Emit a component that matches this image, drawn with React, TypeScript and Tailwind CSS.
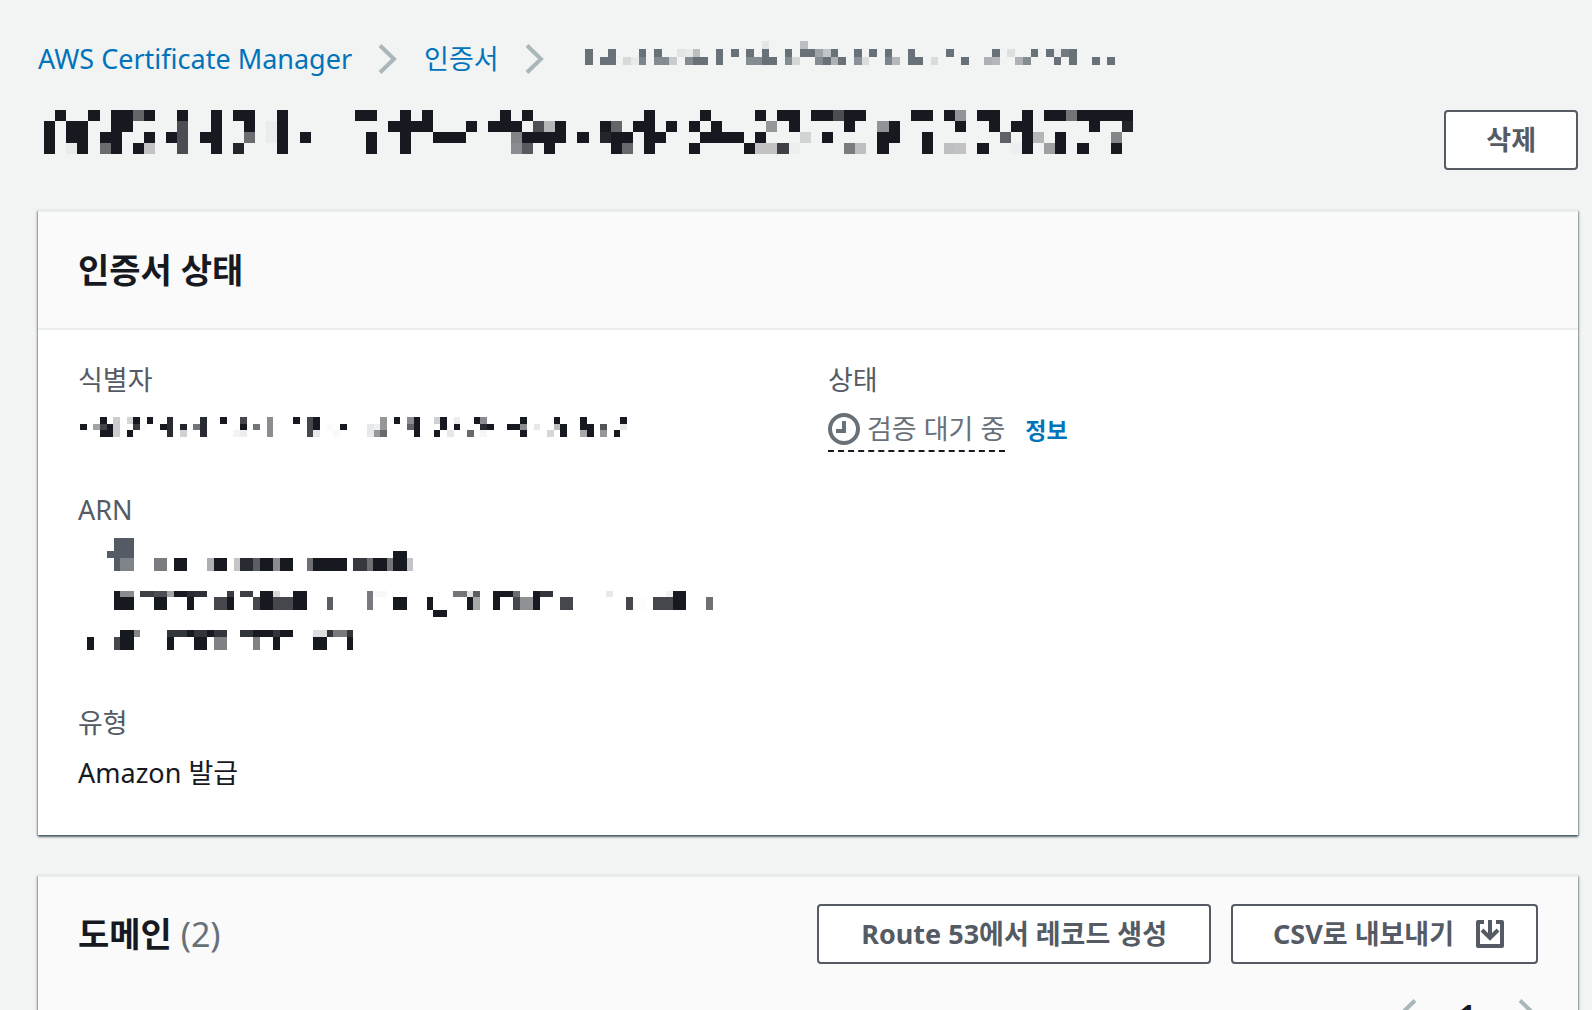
import React from "react";

type Row = { ink: string; slate?: string; span?: number };

/* Each token is "column", "from-to" or either one followed by ":opacity" in percent. */
function Mosaic({
  rows,
  cols,
  ink,
  label,
  className,
}: {
  rows: Row[];
  cols: number;
  ink: string;
  label: string;
  className: string;
}) {
  const cells: React.ReactNode[] = [];
  let y = 0;
  rows.forEach((row, r) => {
    const span = row.span ?? 1;
    const add = (text: string, fill: string) =>
      text
        .split(" ")
        .filter(Boolean)
        .forEach((token) => {
          const [range, opacity] = token.split(":");
          const [from, to] = range.split("-").map(Number);
          cells.push(
            <rect
              key={`${r}-${fill}-${token}`}
              x={from}
              y={y}
              width={(to ?? from) - from + 1}
              height={span}
              fill={fill}
              fillOpacity={opacity ? Number(opacity) / 100 : 1}
            />
          );
        });
    add(row.ink, ink);
    if (row.slate) add(row.slate, "#545b64");
    y += span;
  });
  return (
    <svg
      role="img"
      aria-label={label}
      viewBox={`0 0 ${cols} ${y}`}
      preserveAspectRatio="none"
      shapeRendering="crispEdges"
      className={className}
    >
      {cells}
    </svg>
  );
}

const crumbRows: Row[] = [
  { ink: "23:10 28:40" },
  { ink: "0 3 7 9 12:12 13:7 14:40 17 19 21 23 26 28-29 30:60 31:35 32 35 37 39 42 47 53 55:15 58 60 61:4 62:93 63" },
  { ink: "0 2-3 5:20 6:6 7:85 9-10:80 11:30 13:80 14-15 17 21-22:80 23-24 26:80 27:22 30:80 31 32:50 33 35:75 36:18 39:85 40:45 42-43 45:18 49 52:50 53:45 56:50 57:80 61 63 66 68" },
];

const titleRows: Row[] = [
  { ink: "1 4 6-7 8:65 9 12 15 17-18 21 28-29 32 34 41 43 54 59 64 66-67 69-70 71:76 72-73 78-79 81 82:44 84-85 88 90-91 92:58 93-97" },
  { ink: "0 2-3 6-7 12:76 15 18 20:3 21 31-34 38 40-42 44:75 45:28 46 50 51:65 53-54 56 58 60 65:42 67 72 75:44 76 82 85 87-88 94 97:95" },
  { ink: "0 2-3 5-6 9 11 12:76 14-15 18:61 20:3 21 23 29 32 35-37 42:51 43-46 48 50:95 51-52 54-55 59-62 64 68:14 70 75-76 79 86:67 88 89:28 91 96:50" },
  { ink: "0 2:4 3 5:62 6 8 9:22 12:76 15 17:95 21 29 32 42:47 43:70 45 51 52:64 54 58 63 64-65:22 66:82 67:2 72:55 73:24 75 79 81:24 82:22 84 87:2 88 90:38 91 93 96" },
];

const idRows: Row[] = [
  { ink: "3 5:22 7:18 8 10 13:92 18:92 21 24:80 28:50 32 34:80 35 45:45 47 49:50 50 53:20 54 56:8 59 60:50 66 71 75 81" },
  { ink: "0 2:40 3:82 4 5:22 8:85 9:2 12 13:92 15:95 17:60 18:92 24 26:60 28:50 34:80 35 37:2 39 43:10 44:7 45:45 49:68 50 54 56 60:92 61 64-65 66:50 68:10 71:28 72 75-76 78:75 81:10" },
  { ink: "3-4 5:22 7 13:92 15:20 18:92 23:5 24:8 28:50 34:80 35:10 38:2 43:10 44:45 45:65 50 53 55:10 58:65 60:4 66 70:18 72 75:38 76 78:45 80" },
];

const arnRows: Row[] = [
  { ink: "", slate: "4-6", span: 2 },
  { ink: "46-47", slate: "3-6" },
  {
    ink: "10-11:57 13-14 18:35 19-20 22:25 23-24:92 25:70 26-27 28:50 29-30 33:62 34-38 40-41:86 42:62 43-44 45:60 46-47 48:25",
    slate: "4 5-6:75",
    span: 2,
  },
  { ink: "", span: 3 },
  { ink: "4 5-6:50 8-9:83 10-11:77 12:40 13-14 15:92 16-17:90 21:85 23-24:83 26-27 28:17 31-32 42:58 43-44:3 55-56:60 57:12 58:70 61-63 64:64 67 68-69:88 78:10 87:5 88-89" },
  { ink: "4-6 10-11 15 19-20:80 21 25:80 26-27 28-30:80 31-32 36:70 42:58 46-47 51 57 58:38 61 64:80 65-66:48 67 71-72:80 81:80 82-83:1 85-87:80 88-89 93:62", span: 2 },
  { ink: "52-53" },
  { ink: "", span: 2 },
  { ink: "5-6 7:53 12-14:88 15 16-17:88 18 19-20:88 23-24:88 25-27 28:88 29-30 34-35:15 36:88 37-38:58 39:88" },
  { ink: "0 4:80 5-6 12 16-17 19-20:55 25:55 28 34-35 39", span: 2 },
];

function Chevron({ flip = false }: { flip?: boolean }) {
  return (
    <svg viewBox="0 0 20 30" className="h-[30px] w-5 shrink-0" fill="none" stroke="#aab7b8" strokeWidth="4" aria-hidden="true">
      <path d={flip ? "M18 1.5 4 15l14 13.5" : "M2 1.5 16 15 2 28.5"} />
    </svg>
  );
}

function Button({ children, className = "px-10" }: { children: React.ReactNode; className?: string }) {
  return (
    <button
      type="button"
      className={`flex h-[60px] shrink-0 items-center rounded-[4px] border-2 border-[#545b64] bg-white text-[27px] leading-10 font-bold whitespace-nowrap text-[#545b64] ${className}`}
    >
      {children}
    </button>
  );
}

function Card({ children }: { children: React.ReactNode }) {
  return (
    <section className="border-t-2 border-[#eaeded] bg-white shadow-[0_2px_2px_0_rgba(0,28,36,0.5),1px_1px_2px_0_rgba(0,28,36,0.3),-1px_1px_2px_0_rgba(0,28,36,0.3)]">
      {children}
    </section>
  );
}

function Field({ label, children }: { label: string; children: React.ReactNode }) {
  return (
    <div>
      <dt className="leading-[44px] text-[#545b64]">{label}</dt>
      <dd className="mt-[6px]">{children}</dd>
    </div>
  );
}

export default function App() {
  return (
    <main className="h-screen overflow-hidden bg-[#f2f3f3] pr-[14px] pl-[38px] font-['Noto_Sans','Noto_Sans_CJK_KR',sans-serif] text-[27px] leading-[44px] text-[#16191f]">
      <nav aria-label="breadcrumb" className="pt-[37px]">
        <ol className="flex items-center text-[#0073bb]">
          <li className="flex items-center">
            <a href="#acm">AWS Certificate Manager</a>
            <span className="mx-[26px] flex">
              <Chevron />
            </span>
          </li>
          <li className="flex items-center">
            <a href="#certificates">인증서</a>
            <span className="mx-[26px] flex">
              <Chevron />
            </span>
          </li>
          <li className="ml-[14px]">
            <Mosaic rows={crumbRows} cols={69} ink="#687078" label="가려진 인증서 ID" className="mb-3 h-6 w-[530px]" />
          </li>
        </ol>
      </nav>

      <header className="mt-[29px] flex items-start justify-between">
        <h1 className="ml-[6px]">
          <Mosaic rows={titleRows} cols={98} ink="#16191f" label="가려진 인증서 ID" className="h-11 w-[1089px]" />
        </h1>
        <Button>삭제</Button>
      </header>

      <div className="mt-[40px] flex flex-col gap-10">
        <Card>
          <div className="border-b-2 border-[#eaeded] bg-[#fafafa] px-10 py-[35px]">
            <h2 className="text-[34px] leading-[46px] font-bold">인증서 상태</h2>
          </div>
          <dl className="grid grid-cols-2 gap-10 px-10 pt-[28px] pb-10">
            <div className="flex flex-col gap-9">
              <Field label="식별자">
                <div className="flex h-[44px] items-start pt-[9px] pl-[2px]">
                  <Mosaic rows={idRows} cols={82} ink="#16191f" label="가려진 식별자" className="h-5 w-[547px]" />
                </div>
              </Field>
              <Field label="ARN">
                <div className="flex h-[127px] items-start pl-[9px]">
                  <Mosaic rows={arnRows} cols={94} ink="#16191f" label="가려진 ARN" className="h-28 w-[626px]" />
                </div>
              </Field>
              <Field label="유형">Amazon 발급</Field>
            </div>
            <div>
              <Field label="상태">
                <div className="flex items-center gap-5">
                  <span className="flex items-center gap-[7px] border-b-2 border-dashed border-[#16191f] leading-[42px] text-[#687078]">
                    <svg viewBox="0 0 32 32" className="size-8" fill="none" stroke="#687078" strokeWidth="4" aria-hidden="true">
                      <circle cx="16" cy="16" r="14" />
                      <path d="M16 8v10H8" />
                    </svg>
                    검증 대기 중
                  </span>
                  <a href="#info" className="text-[23px] font-bold text-[#0073bb]">
                    정보
                  </a>
                </div>
              </Field>
            </div>
          </dl>
        </Card>

        <Card>
          <div className="bg-[#fafafa] px-10 pt-[27px] pb-10">
            <div className="flex items-center justify-between">
              <h2 className="text-[34px] leading-[46px] font-bold">
                도메인 <span className="font-normal text-[#687078]">(2)</span>
              </h2>
              <div className="flex gap-5">
                <Button className="px-[42px]">Route 53에서 레코드 생성</Button>
                <Button className="gap-[22px] pr-8 pl-10">
                  CSV로 내보내기
                  <svg viewBox="0 0 28 28" className="size-7" fill="none" stroke="#545b64" strokeWidth="4" aria-hidden="true">
                    <path d="M8 2H2v24h24V2h-6" strokeLinejoin="round" />
                    <path d="M14 0v17M6 10l8 8 8-8" />
                  </svg>
                </Button>
              </div>
            </div>
            <div className="mt-[28px] flex items-center justify-end">
              <button type="button" aria-label="이전 페이지">
                <Chevron flip />
              </button>
              <button type="button" aria-current="page" className="w-[101px] font-bold">
                1
              </button>
              <button type="button" aria-label="다음 페이지">
                <Chevron />
              </button>
            </div>
          </div>
        </Card>
      </div>
    </main>
  );
}
